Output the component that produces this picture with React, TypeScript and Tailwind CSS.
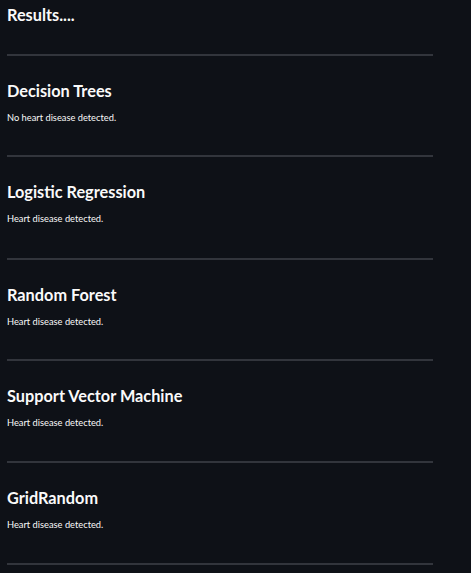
import React from "react";

const sections = [
  { title: "Decision Trees", text: "No heart disease detected.", h: 101 },
  { title: "Logistic Regression", text: "Heart disease detected.", h: 103 },
  { title: "Random Forest", text: "Heart disease detected.", h: 101 },
  { title: "Support Vector Machine", text: "Heart disease detected.", h: 102 },
  { title: "GridRandom", text: "Heart disease detected.", h: 102 },
];

function Rule() {
  return <div className="h-[2px] bg-[#32353c]" />;
}

export default function App() {
  return (
    <div
      className="w-[471px] h-[573px] overflow-hidden bg-[#0e1117] text-[#fafafa]"
      style={{ fontFamily: 'Lato, "Open Sans", sans-serif' }}
    >
      <div className="w-[433px] pl-[7px]">
        <div className="pt-[3px] h-[54px] text-[16.3px] leading-[24px] font-bold">Results....</div>
        {sections.map((s) => (
          <div key={s.title} className="flex flex-col" style={{ height: s.h }}>
            <Rule />
            <div className="pt-[23px] text-[16.3px] leading-[24px] font-bold">{s.title}</div>
            <div className="mt-[8px] text-[9.3px] leading-[14px]">{s.text}</div>
          </div>
        ))}
        <Rule />
      </div>
    </div>
  );
}
